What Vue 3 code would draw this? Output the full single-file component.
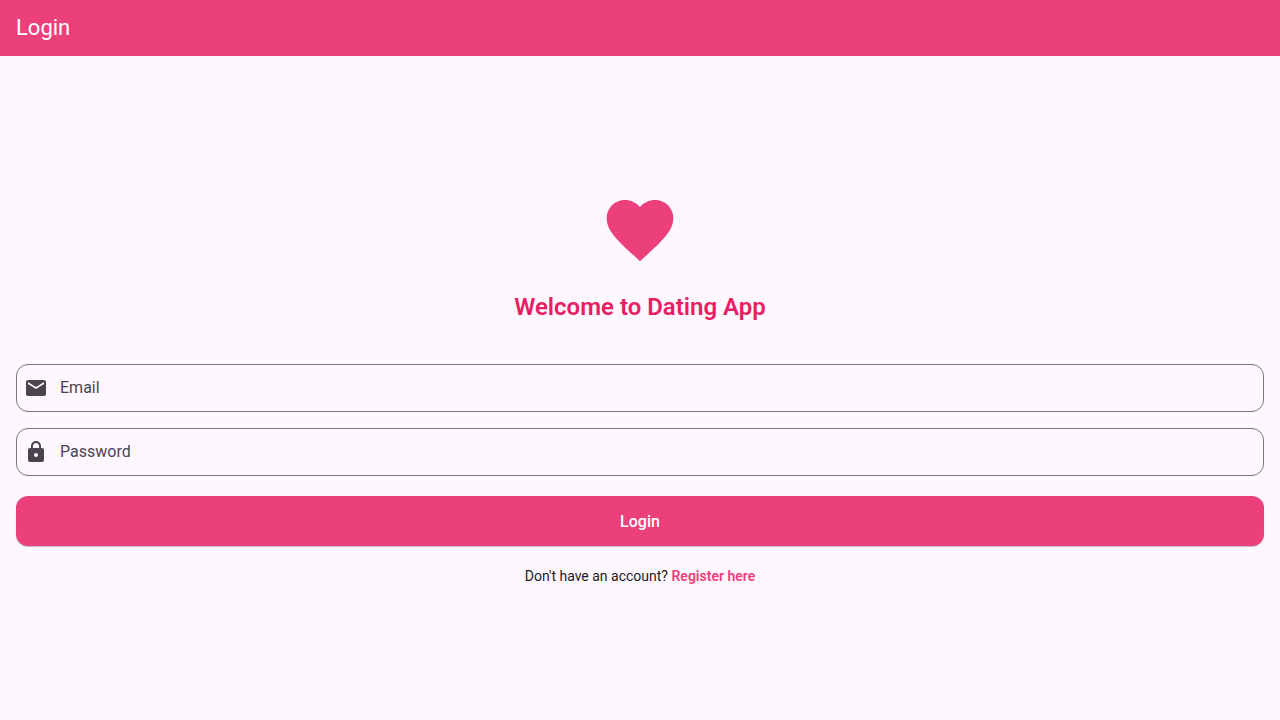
<script setup>
import { ref } from 'vue'

const email = ref('')
const password = ref('')
</script>

<template>
  <div class="page">
    <header class="app-bar">
      <h1>Login</h1>
    </header>
    <main class="content">
      <svg class="heart" viewBox="0 0 24 24" aria-hidden="true">
        <path d="M12 21.35l-1.45-1.32C5.4 15.36 2 12.28 2 8.5 2 5.42 4.42 3 7.5 3c1.74 0 3.41.81 4.5 2.09C13.09 3.81 14.76 3 16.5 3 19.58 3 22 5.42 22 8.5c0 3.78-3.4 6.86-8.55 11.54L12 21.35z" />
      </svg>
      <h2 class="title">Welcome to Dating App</h2>
      <form class="form" @submit.prevent>
        <label class="field" for="email">
          <svg class="icon" viewBox="0 0 24 24" aria-hidden="true">
            <path d="M20 4H4c-1.1 0-1.99.9-1.99 2L2 18c0 1.1.9 2 2 2h16c1.1 0 2-.9 2-2V6c0-1.1-.9-2-2-2zm0 4l-8 5-8-5V6l8 5 8-5v2z" />
          </svg>
          <input id="email" v-model="email" type="email" placeholder="Email" aria-label="Email" />
        </label>
        <label class="field" for="password">
          <svg class="icon" viewBox="0 0 24 24" aria-hidden="true">
            <path d="M18 8h-1V6c0-2.76-2.24-5-5-5S7 3.24 7 6v2H6c-1.1 0-2 .9-2 2v10c0 1.1.9 2 2 2h12c1.1 0 2-.9 2-2V10c0-1.1-.9-2-2-2zm-6 9c-1.1 0-2-.9-2-2s.9-2 2-2 2 .9 2 2-.9 2-2 2zm3.1-9H8.9V6c0-1.71 1.39-3.1 3.1-3.1 1.71 0 3.1 1.39 3.1 3.1v2z" />
          </svg>
          <input id="password" v-model="password" type="password" placeholder="Password" aria-label="Password" />
        </label>
        <button class="submit" type="submit">Login</button>
      </form>
      <p class="register">Don't have an account? <a href="#register">Register here</a></p>
    </main>
  </div>
</template>

<style>
body {
  margin: 0;
  background: #fef7ff;
}
</style>

<style scoped>
.page {
  display: flex;
  flex-direction: column;
  min-height: 100vh;
  background: #fef7ff;
  color: #1d1b20;
  font-family: Roboto, sans-serif;
}

.app-bar {
  display: flex;
  align-items: center;
  height: 56px;
  padding: 0 16px;
  background: #ec407a;
  color: #fff;
}

.app-bar h1 {
  margin: 0;
  font-size: 22px;
  font-weight: 400;
  line-height: 28px;
}

.content {
  flex: 1;
  display: flex;
  flex-direction: column;
  align-items: center;
  justify-content: center;
  padding: 0 16px;
}

.heart {
  width: 80px;
  height: 80px;
  fill: #ec407a;
}

.title {
  margin: 20px 0 40px;
  color: #e91e63;
  font-size: 24px;
  font-weight: 600;
  line-height: 34px;
}

.form {
  display: flex;
  flex-direction: column;
  gap: 16px;
  width: 100%;
}

.field {
  display: flex;
  align-items: center;
  gap: 12px;
  box-sizing: border-box;
  height: 48px;
  padding: 0 12px 0 7px;
  border: 1px solid #79747e;
  border-radius: 12px;
}

.field:focus-within {
  border-color: #ec407a;
}

.icon {
  flex: none;
  width: 24px;
  height: 24px;
  fill: #49454f;
}

.field input {
  flex: 1;
  min-width: 0;
  padding: 0;
  border: 0;
  outline: 0;
  background: transparent;
  color: #1d1b20;
  font: 400 16px/24px Roboto, sans-serif;
}

.field input::placeholder {
  color: #49454f;
  opacity: 1;
}

.submit {
  height: 50px;
  margin-top: 4px;
  padding: 2px 24px 0;
  border: 0;
  border-radius: 12px;
  background: #ec407a;
  box-shadow: 0 1px 1px rgba(0, 0, 0, 0.24);
  color: #fff;
  font: 500 16px/24px Roboto, sans-serif;
  cursor: pointer;
}

.register {
  margin: 20px 0 0;
  font-size: 14px;
  line-height: 20px;
}

.register a {
  color: #ec407a;
  font-weight: 600;
  text-decoration: none;
}
</style>
